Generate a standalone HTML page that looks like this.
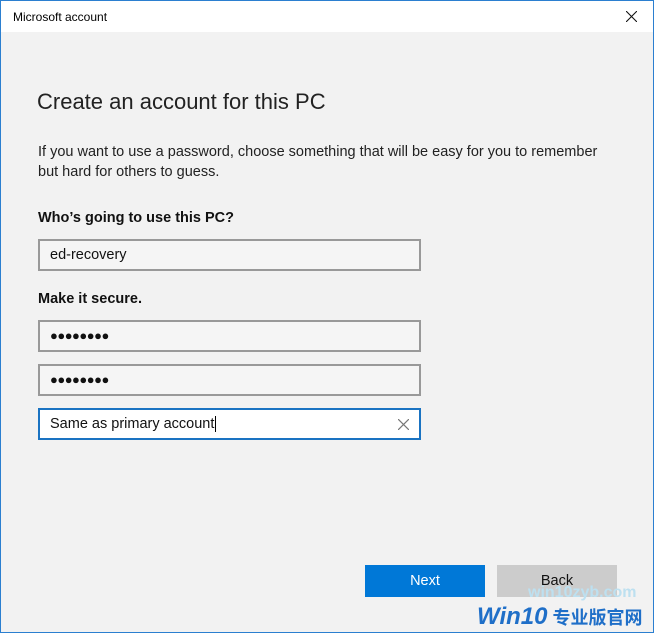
<html><head><style>
body{margin:0;width:654px;height:633px;overflow:hidden;font-family:"Liberation Sans","Noto Sans CJK SC",sans-serif;}
.win{position:absolute;left:0;top:0;width:652px;height:631px;border:1px solid #2b7fd0;background:#f2f2f2;}
.title{position:absolute;left:0;top:0;width:652px;height:31px;background:#fff;}
.t{position:absolute;left:12px;top:9px;font-size:12px;color:#000;}
.x{position:absolute;right:16px;top:10px;}
.h{position:absolute;left:36px;top:88px;font-size:22px;color:#222;font-weight:300;}
.p{position:absolute;left:37px;top:141px;font-size:14.5px;color:#222;line-height:20px;width:578px;}
.l{position:absolute;left:37px;font-size:14.5px;font-weight:bold;color:#111;}
.in{position:absolute;left:37px;height:28px;border:2px solid #999;background:#f5f5f5;font-size:14.5px;line-height:28px;padding-left:10px;width:369px;color:#111}
.dots{font-size:13px;letter-spacing:-0.5px;}
.btn{position:absolute;top:564px;width:120px;height:32px;line-height:32px;text-align:center;font-size:14.5px;}
</style></head><body>
<div class="win">
<div class="title"><div class="t">Microsoft account</div>
<svg class="x" width="11" height="11" viewBox="0 0 11 11"><path d="M0 0L11 11M11 0L0 11" stroke="#111" stroke-width="1.1"/></svg></div>
<div class="h">Create an account for this PC</div>
<div class="p">If you want to use a password, choose something that will be easy for you to remember but hard for others to guess.</div>
<div class="l" style="top:209px">Who’s going to use this PC?</div>
<div class="in" style="top:238px">ed-recovery</div>
<div class="l" style="top:290px">Make it secure.</div>
<div class="in dots" style="top:319px">●●●●●●●●</div>
<div class="in dots" style="top:363px">●●●●●●●●</div>
<div class="in" style="top:407px;border-color:#1a73c2;background:#fff">Same as primary account<span style="border-left:1px solid #000;margin-left:1px"></span>
<svg style="position:absolute;right:10px;top:9px" width="11" height="11" viewBox="0 0 11 11"><path d="M0 0L11 11M11 0L0 11" stroke="#777" stroke-width="1.2"/></svg></div>
<div class="btn" style="left:364px;background:#0078d7;color:#fff">Next</div>
<div class="btn" style="left:496px;background:#cccccc;color:#111">Back</div>
<div style="position:absolute;left:527px;top:583px;font-size:16px;font-weight:bold;color:#bde0f0;white-space:nowrap">win10zyb.com</div>
<div style="position:absolute;left:476px;top:602px;font-size:24px;font-weight:bold;font-style:italic;color:#1f6fc8;white-space:nowrap">Win10<span style="font-style:normal;font-size:18px"> 专业版官网</span></div>
</div>
</body></html>
